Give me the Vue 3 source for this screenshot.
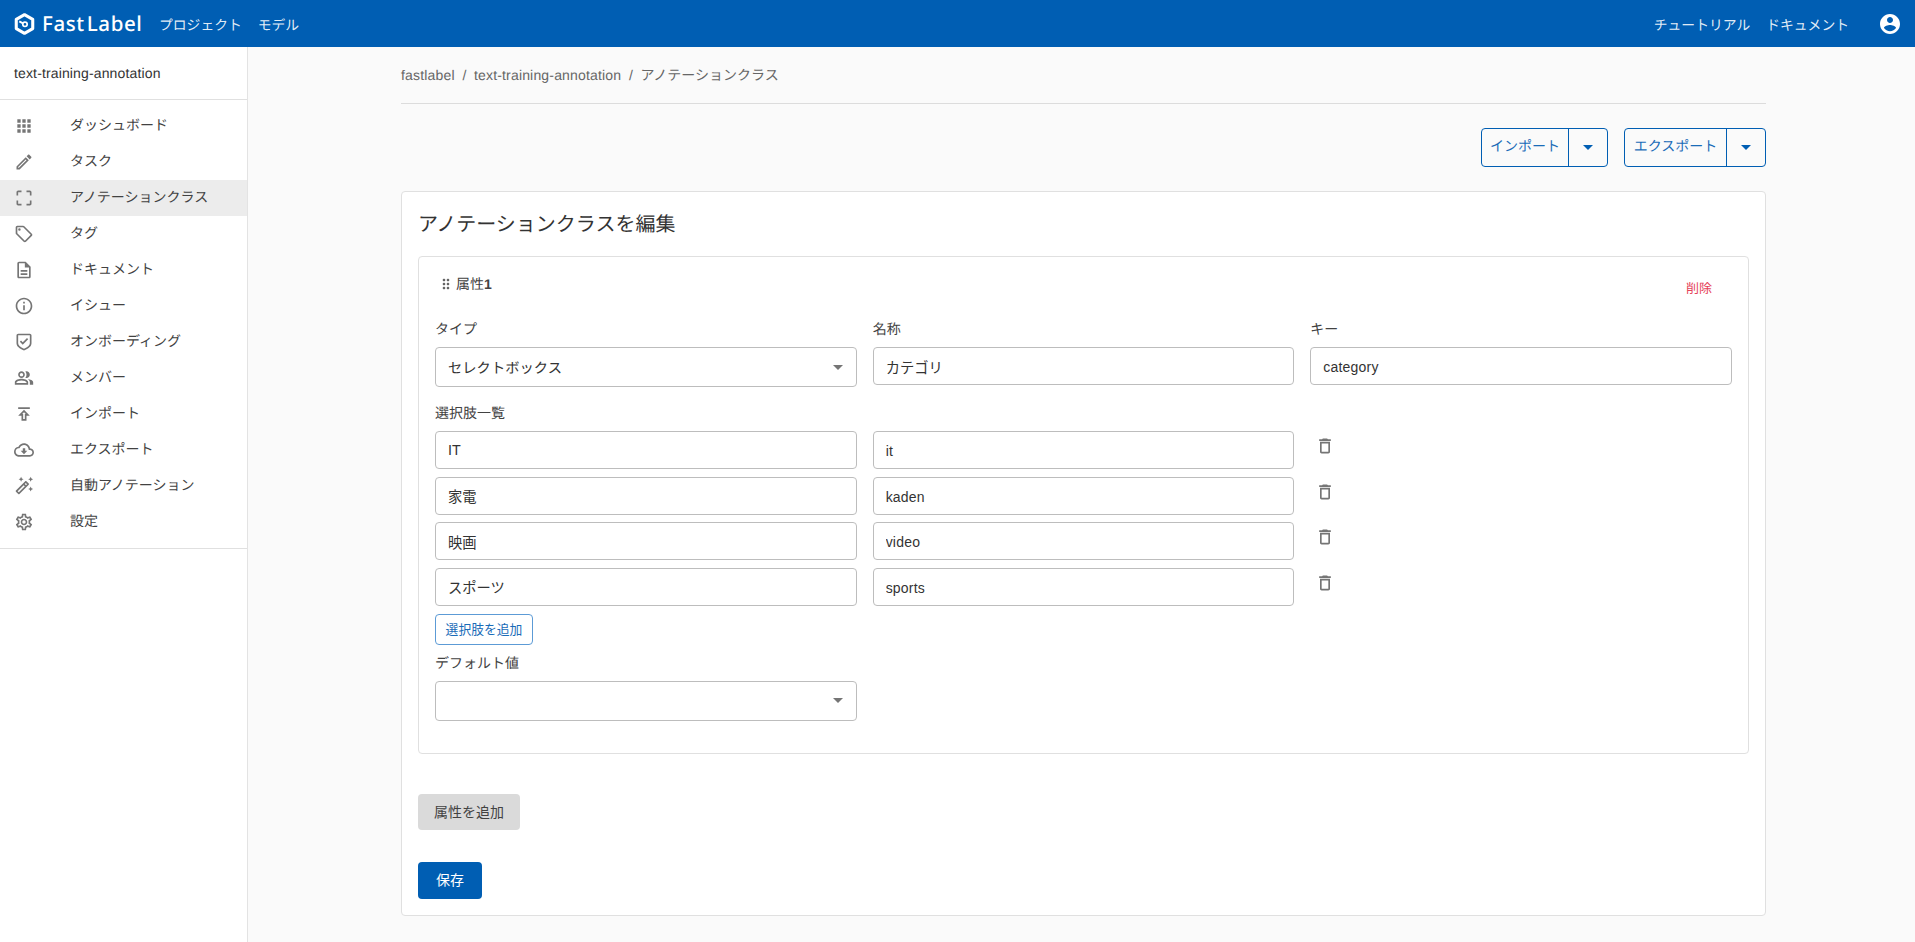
<script setup>
const I = {
  apps: 'M4 8h4V4H4v4zm6 12h4v-4h-4v4zm-6 0h4v-4H4v4zm0-6h4v-4H4v4zm6 0h4v-4h-4v4zm6-10v4h4V4h-4zm-6 4h4V4h-4v4zm6 6h4v-4h-4v4zm0 6h4v-4h-4v4z',
  edit: 'M3 17.25V21h3.75L17.81 9.94l-3.75-3.75L3 17.25zM5.92 19H5v-.92l9.06-9.06.92.92L5.92 19zM20.71 5.63l-2.34-2.34c-.2-.2-.45-.29-.71-.29s-.51.1-.7.29l-1.83 1.83 3.75 3.75 1.83-1.83c.39-.39.39-1.02 0-1.41z',
  crop: 'M3 5v4h2V5h4V3H5c-1.1 0-2 .9-2 2zm2 10H3v4c0 1.1.9 2 2 2h4v-2H5v-4zm14 4h-4v2h4c1.1 0 2-.9 2-2v-4h-2v4zm0-16h-4v2h4v4h2V5c0-1.1-.9-2-2-2z',
  tag: 'M21.41 11.58l-9-9C12.05 2.22 11.55 2 11 2H4c-1.1 0-2 .9-2 2v7c0 .55.22 1.05.59 1.42l9 9c.36.36.86.58 1.41.58s1.05-.22 1.41-.59l7-7c.37-.36.59-.86.59-1.41s-.23-1.06-.59-1.42zM13 20.01L4 11V4h7v-.01l9 9-7 7.02zM6.5 5A1.5 1.5 0 1 0 6.5 8 1.5 1.5 0 1 0 6.5 5z',
  doc: 'M8 16h8v2H8zm0-4h8v2H8zm6-10H6c-1.1 0-2 .9-2 2v16c0 1.1.89 2 1.99 2H18c1.1 0 2-.9 2-2V8l-6-6zm4 18H6V4h7v5h5v11z',
  info: 'M11 7h2v2h-2zm0 4h2v6h-2zm1-9C6.48 2 2 6.48 2 12s4.48 10 10 10 10-4.48 10-10S17.52 2 12 2zm0 18c-4.41 0-8-3.59-8-8s3.59-8 8-8 8 3.59 8 8-3.59 8-8 8z',
  shield: 'M5 2h14c1.1 0 2 .9 2 2v9.5c0 3.6-3.6 6.6-9 8.7-5.400-2.100-9-5.100-9-8.700V4c0-1.100.9-2 2-2zm0 2v9.500c0 2.500 2.700 4.800 7 6.600 4.300-1.800 7-4.100 7-6.600V4H5zm5.500 11.200L7 11.700l1.400-1.400 2.100 2.100 5.100-5.100L17 8.700l-6.500 6.500z',
  people: 'M16.67 13.13C18.04 14.06 19 15.32 19 17v3h4v-3c0-2.180-3.570-3.470-6.330-3.870zM15 12c2.210 0 4-1.790 4-4s-1.790-4-4-4c-.47 0-.91.1-1.330.24C14.500 5.270 15 6.580 15 8s-.5 2.730-1.330 3.760c.42.14.86.24 1.330.24zM9 12c2.210 0 4-1.790 4-4s-1.790-4-4-4-4 1.790-4 4 1.790 4 4 4zm0-6c1.100 0 2 .9 2 2s-.9 2-2 2-2-.9-2-2 .9-2 2-2zM9 13c-2.670 0-8 1.340-8 4v3h16v-3c0-2.660-5.330-4-8-4zm6 5H3v-.99C3.200 16.290 6.300 15 9 15s5.800 1.290 6 2z',
  publish: 'M5 4v2h14V4H5zm0 10h4v6h6v-6h4l-7-7-7 7zm8-2v6h-2v-6H9.830L12 9.830 14.170 12H13z',
  cloud: 'M19.350 10.040C18.670 6.590 15.640 4 12 4 9.110 4 6.600 5.640 5.350 8.040 2.340 8.360 0 10.910 0 14c0 3.310 2.690 6 6 6h13c2.760 0 5-2.240 5-5 0-2.640-2.050-4.780-4.650-4.960zM19 18H6c-2.210 0-4-1.790-4-4 0-2.050 1.530-3.760 3.560-3.970l1.070-.11.5-.95C8.080 7.140 9.940 6 12 6c2.620 0 4.880 1.860 5.390 4.430l.3 1.500 1.530.11c1.560.1 2.780 1.410 2.780 2.960 0 1.650-1.350 3-3 3zm-5.550-8h-2.900v3H8l4 4 4-4h-2.550z',
  wand: 'M20 7l.94-2.060L23 4l-2.060-.94L20 1l-.94 2.060L17 4l2.060.94zM8.500 7l.94-2.060L11.500 4l-2.060-.94L8.500 1l-.94 2.060L5.500 4l2.060.94zM20 12.500l-.94 2.060-2.060.94 2.060.94.94 2.060.94-2.060L23 15.500l-2.060-.94zM17.710 9.120l-2.830-2.830C14.680 6.100 14.430 6 14.170 6c-.26 0-.51.1-.71.29L2.290 17.460c-.39.39-.39 1.020 0 1.410l2.830 2.830c.2.2.45.3.71.3s.51-.1.71-.29l11.170-11.170c.39-.39.39-1.030 0-1.420zM14.170 8.420l1.410 1.410L14.410 11 13 9.590l1.170-1.170zM5.830 19.590l-1.410-1.410L11.590 11 13 12.410l-7.170 7.180z',
  gear: 'M19.430 12.980c.04-.32.07-.64.07-.98 0-.34-.03-.66-.07-.98l2.110-1.650c.19-.15.24-.42.12-.64l-2-3.460c-.09-.16-.26-.25-.44-.25-.06 0-.12.01-.17.03l-2.490 1c-.52-.4-1.080-.73-1.690-.98l-.38-2.650C14.460 2.180 14.250 2 14 2h-4c-.25 0-.46.18-.49.42l-.38 2.650c-.61.25-1.170.59-1.690.98l-2.490-1c-.06-.02-.12-.03-.18-.03-.17 0-.34.09-.43.25l-2 3.460c-.13.22-.07.49.12.64l2.110 1.650c-.04.32-.07.65-.07.98 0 .33.03.66.07.98l-2.110 1.650c-.19.15-.24.42-.12.64l2 3.460c.09.16.26.25.44.25.06 0 .12-.01.17-.03l2.490-1c.52.4 1.080.73 1.690.98l.38 2.650c.03.24.24.42.49.42h4c.25 0 .46-.18.49-.42l.38-2.650c.61-.25 1.170-.59 1.690-.98l2.490 1c.06.02.12.03.18.03.17 0 .34-.09.43-.25l2-3.460c.12-.22.07-.49-.12-.64l-2.110-1.650zm-1.980-1.710c.04.31.05.52.05.73 0 .21-.02.43-.05.73l-.14 1.130.89.7 1.080.84-.7 1.210-1.270-.51-1.040-.42-.9.68c-.43.32-.84.56-1.250.73l-1.060.43-.16 1.130-.2 1.350h-1.400l-.19-1.350-.16-1.130-1.060-.43c-.43-.18-.83-.41-1.230-.71l-.91-.7-1.060.43-1.270.51-.7-1.210 1.080-.84.89-.7-.14-1.130c-.03-.31-.05-.54-.05-.74s.02-.43.05-.73l.14-1.130-.89-.7-1.080-.84.7-1.210 1.270.51 1.040.42.9-.68c.43-.32.84-.56 1.250-.73l1.060-.43.16-1.130.2-1.350h1.390l.19 1.350.16 1.130 1.060.43c.43.18.83.41 1.230.71l.91.7 1.060-.43 1.270-.51.7 1.210-1.070.85-.89.7.14 1.130zM12 8c-2.210 0-4 1.790-4 4s1.790 4 4 4 4-1.790 4-4-1.790-4-4-4zm0 6c-1.100 0-2-.9-2-2s.9-2 2-2 2 .9 2 2-.9 2-2 2z'
}
const menu = [
  ['apps', 'ダッシュボード'], ['edit', 'タスク'], ['crop', 'アノテーションクラス', true], ['tag', 'タグ'],
  ['doc', 'ドキュメント'], ['info', 'イシュー'], ['shield', 'オンボーディング'], ['people', 'メンバー'],
  ['publish', 'インポート'], ['cloud', 'エクスポート'], ['wand', '自動アノテーション'], ['gear', '設定']
]
const options = [['IT', 'it'], ['家電', 'kaden'], ['映画', 'video'], ['スポーツ', 'sports']]
const trash = 'M6 19c0 1.100.9 2 2 2h8c1.100 0 2-.9 2-2V7H6v12zM8 9h8v10H8V9zm7.500-5l-1-1h-5l-1 1H5v2h14V4z'
const drag = 'M11 18c0 1.100-.9 2-2 2s-2-.9-2-2 .9-2 2-2 2 .9 2 2zm-2-8c-1.100 0-2 .9-2 2s.9 2 2 2 2-.9 2-2-.9-2-2-2zm0-6c-1.100 0-2 .9-2 2s.9 2 2 2 2-.9 2-2-.9-2-2-2zm6 4c1.100 0 2-.9 2-2s-.9-2-2-2-2 .9-2 2 .9 2 2 2zm0 2c-1.100 0-2 .9-2 2s.9 2 2 2 2-.9 2-2-.9-2-2-2zm0 6c-1.100 0-2 .9-2 2s.9 2 2 2 2-.9 2-2-.9-2-2-2z'
const account = 'M12 2C6.480 2 2 6.480 2 12s4.480 10 10 10 10-4.480 10-10S17.520 2 12 2zm0 3c1.660 0 3 1.340 3 3s-1.340 3-3 3-3-1.340-3-3 1.340-3 3-3zm0 14.200c-2.500 0-4.710-1.280-6-3.220.03-1.990 4-3.080 6-3.080 1.990 0 5.970 1.090 6 3.080-1.290 1.940-3.500 3.220-6 3.220z'
</script>

<template>
  <div class="page">
    <header class="top">
      <div class="brand">
        <svg class="logo" viewBox="0 0 24 24" fill="none" stroke="#fff">
          <path d="M12 2.300 20.600 7.200V16.800L12 21.700 3.400 16.800V7.200Z" stroke-width="3.200" stroke-linejoin="round" />
          <circle cx="12.500" cy="12.300" r="2.300" stroke-width="1.800" />
          <path d="M10.500 11.300 6.500 9.300" stroke-width="2" />
        </svg>
        <span class="word">Fast<span class="word-gap">Label</span></span>
      </div>
      <nav class="nav">
        <a>プロジェクト</a>
        <a>モデル</a>
      </nav>
      <nav class="nav nav-right">
        <a>チュートリアル</a>
        <a>ドキュメント</a>
      </nav>
      <svg class="avatar" viewBox="0 0 24 24"><path :d="account" fill="#fff" /></svg>
    </header>

    <div class="body">
      <aside class="side">
        <div class="side-title">text-training-annotation</div>
        <ul class="menu">
          <li v-for="m in menu" :key="m[1]" class="item" :class="{ active: m[2] }">
            <svg class="mi" viewBox="0 0 24 24"><path :d="I[m[0]]" fill="#757575" /></svg>
            <span class="item-text">{{ m[1] }}</span>
          </li>
        </ul>
      </aside>

      <main class="main">
        <div class="crumbs">
          <span class="latin">fastlabel</span><i>/</i><span class="latin">text-training-annotation</span><i>/</i><span class="cur">アノテーションクラス</span>
        </div>

        <div class="actions">
          <div class="split import">
            <span class="split-label">インポート</span>
            <span class="split-caret"><b class="caret blue"></b></span>
          </div>
          <div class="split export">
            <span class="split-label">エクスポート</span>
            <span class="split-caret"><b class="caret blue"></b></span>
          </div>
        </div>

        <section class="card">
          <h1 class="title">アノテーションクラスを編集</h1>

          <div class="attr">
            <div class="attr-head">
              <div class="attr-name">
                <svg class="drag" viewBox="0 0 24 24"><path :d="drag" fill="#616161" /></svg>
                <span>属性<b>1</b></span>
              </div>
              <span class="del">削除</span>
            </div>

            <div class="grid">
              <div>
                <div class="label">タイプ</div>
                <div class="select"><span>セレクトボックス</span><b class="caret"></b></div>
              </div>
              <div>
                <div class="label">名称</div>
                <input class="input" value="カテゴリ" />
              </div>
              <div>
                <div class="label">キー</div>
                <input class="input input-latin" value="category" />
              </div>
            </div>

            <div class="label opt-label">選択肢一覧</div>
            <div class="opts">
              <div v-for="o in options" :key="o[1]" class="grid">
                <input class="input" :value="o[0]" />
                <input class="input input-latin" :value="o[1]" />
                <div class="trash-cell">
                  <svg class="trash" viewBox="0 0 24 24"><path :d="trash" fill="#757575" /></svg>
                </div>
              </div>
            </div>
            <button class="add-opt">選択肢を追加</button>

            <div class="label def-label">デフォルト値</div>
            <div class="grid">
              <div class="select"><span></span><b class="caret"></b></div>
            </div>
          </div>

          <button class="add-attr">属性を追加</button>
          <button class="save">保存</button>
        </section>
      </main>
    </div>
  </div>
</template>

<style>
html, body { margin: 0; background: #fafafa; }
</style>

<style scoped>
* { box-sizing: border-box; }
.page {
  height: 942px;
  display: flex;
  flex-direction: column;
  overflow: hidden;
  font-family: "Liberation Sans", "Noto Sans CJK JP", sans-serif;
  font-size: 14px;
  color: #333;
  background: #fafafa;
  text-rendering: geometricPrecision;
}
.top {
  height: 47px;
  flex: none;
  display: flex;
  align-items: center;
  background: #005eb3;
  color: #fff;
  padding: 0 13px;
}
.brand { display: flex; align-items: center; width: 146px; }
.logo { width: 23px; height: 24px; flex: none; }
.word {
  margin-left: 6px;
  font-family: "Noto Sans", sans-serif;
  font-weight: 500;
  font-size: 20.500px;
  letter-spacing: .6px;
}
.word-gap { margin-left: 2px; }
.nav { display: flex; gap: 16px; font-size: 13.800px; color: rgba(255,255,255,.9); }
.nav-right { margin-left: auto; }
.avatar { width: 24px; height: 24px; margin-left: 29px; flex: none; }
.body { flex: 1; display: flex; min-height: 0; }
.side {
  width: 248px;
  flex: none;
  background: #fff;
  border-right: 1px solid #e3e3e3;
}
.side-title {
  height: 53px;
  padding: 0 14px;
  display: flex;
  align-items: center;
  border-bottom: 1px solid #e0e0e0;
  color: #333;
  letter-spacing: .14px;
}
.menu {
  list-style: none;
  margin: 0;
  padding: 8px 0;
  border-bottom: 1px solid #e0e0e0;
}
.item {
  height: 36px;
  display: flex;
  align-items: center;
  padding-left: 14px;
  color: #424242;
}
.item-text { margin-top: -2px; }
.item.active { background: #ececec; }
.mi { width: 20px; height: 20px; margin-right: 36px; flex: none; }
.main {
  flex: 1;
  min-width: 0;
  padding: 0 149px 0 153px;
}
.crumbs {
  height: 57px;
  padding-bottom: 1px;
  display: flex;
  align-items: center;
  border-bottom: 1px solid #dcdcdc;
  color: #666;
}
.crumbs i { font-style: normal; margin: 0 7.700px; }
.latin { letter-spacing: .17px; }
.actions {
  display: flex;
  justify-content: flex-end;
  gap: 16px;
  margin-top: 24px;
}
.split {
  height: 39px;
  display: flex;
  border: 1px solid #005eb3;
  border-radius: 4px;
  color: #1a6cb8;
}
.split-label {
  display: flex;
  align-items: center;
  justify-content: center;
  border-right: 1px solid #005eb3;
  padding-bottom: 3px;
}
.split-caret { display: flex; align-items: center; justify-content: center; flex: 1; }
.import { width: 127px; }
.import .split-label { width: 87px; }
.export { width: 142px; }
.export .split-label { width: 102px; }
.caret {
  width: 0;
  height: 0;
  border-left: 5px solid transparent;
  border-right: 5px solid transparent;
  border-top: 5px solid #757575;
}
.caret.blue { border-top-color: #005eb3; }
.card {
  margin-top: 24px;
  background: #fff;
  border: 1px solid #e0e0e0;
  border-radius: 4px;
  padding: 16px;
}
.title {
  margin: 0 0 16px;
  padding-top: 1px;
  height: 32px;
  font-size: 20px;
  font-weight: 400;
  line-height: 32px;
  color: #333;
}
.attr {
  border: 1px solid #e0e0e0;
  border-radius: 4px;
  padding: 16px 16px 32px;
}
.attr-head {
  display: flex;
  justify-content: space-between;
  height: 22px;
  margin-bottom: 23px;
}
.attr-name { display: flex; align-items: center; padding: 0 0 1px 3px; color: #424242; }
.attr-name b { font-weight: 700; }
.drag { width: 16px; height: 16px; margin-right: 2px; }
.del {
  color: #e5445a;
  font-size: 13px;
  line-height: 20px;
  margin: 6px 20px 0 0;
}
.grid {
  display: grid;
  grid-template-columns: repeat(3, minmax(0, 1fr));
  column-gap: 16px;
}
.label {
  height: 20px;
  line-height: 22px;
  margin-bottom: 9px;
  color: #424242;
}
.opt-label { margin-top: 15px; }
.def-label { margin-top: 7px; }
.input, .select {
  display: flex;
  align-items: center;
  width: 100%;
  border: 1px solid #bdbdbd;
  border-radius: 4px;
  background: #fff;
  padding: 0 12px;
  font: inherit;
  font-size: 14.300px;
  color: #333;
  outline: none;
}
.input { height: 38px; }
.input-latin { font-size: 14px; letter-spacing: .2px; padding-top: 2px; }
.select { height: 40px; justify-content: space-between; padding-right: 13px; }
.opts { display: flex; flex-direction: column; gap: 7.670px; }
.trash-cell { padding: 5px 0 0 5px; }
.trash { width: 20px; height: 20px; display: block; }
.add-opt {
  display: block;
  margin-top: 8px;
  width: 98px;
  height: 31px;
  padding: 0 0 2px;
  border: 1px solid #5c9bd6;
  border-radius: 4px;
  background: #fff;
  color: #1a6cb8;
  font: inherit;
  font-size: 12.800px;
}
.add-attr, .save {
  display: block;
  padding: 0 0 2px;
  border: 0;
  border-radius: 4px;
  font: inherit;
}
.add-attr {
  margin-top: 40px;
  width: 102px;
  height: 36px;
  background: #dadada;
  color: #424242;
}
.save {
  margin-top: 32px;
  width: 64px;
  height: 37px;
  background: #005eb3;
  color: #fff;
}
</style>
